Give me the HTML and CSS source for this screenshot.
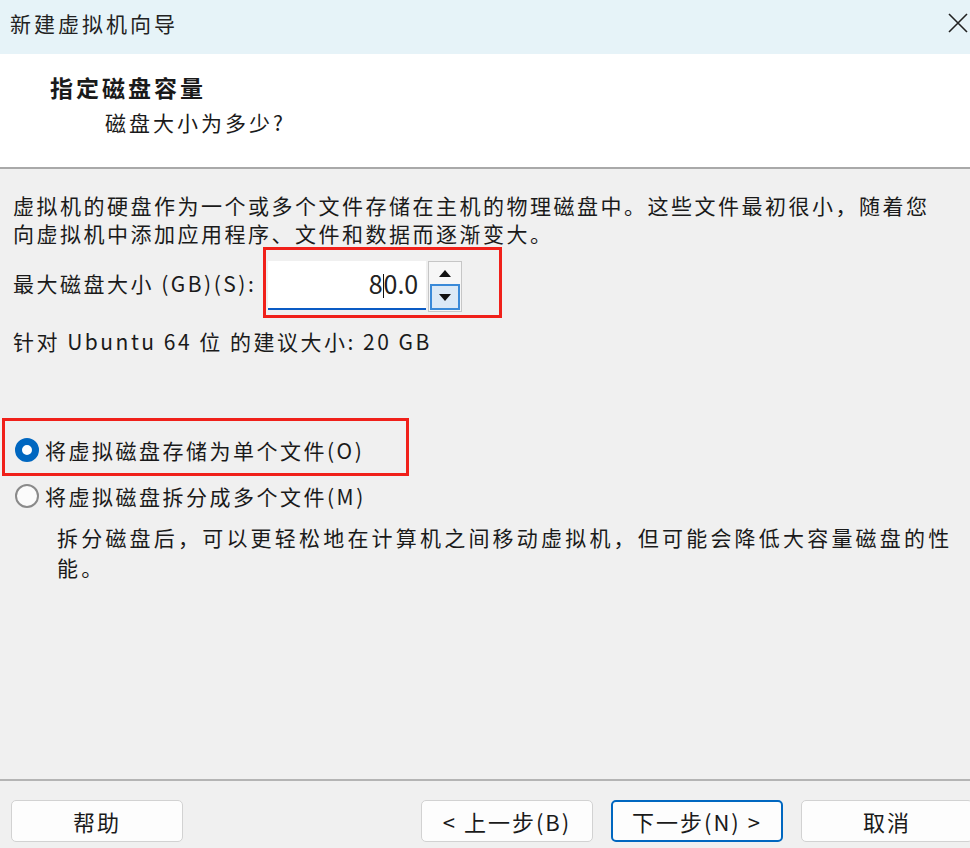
FILE: index.html
```
<!DOCTYPE html>
<html lang="zh-CN">
<head>
    <meta charset="UTF-8">
    <meta name="viewport" content="width=device-width, initial-scale=1.0">
    <title>新建虚拟机向导</title>
    <link rel="stylesheet" href="styles.css">
</head>
<body>
    <div class="dialog">
        <!-- Title bar -->
        <div class="titlebar">
            <span class="title">新建虚拟机向导</span>
            <span class="close">
                <svg width="22" height="22" viewBox="0 0 22 22"><path d="M2 2L20 20M20 2L2 20" stroke="#222" stroke-width="1.6" fill="none"/></svg>
            </span>
        </div>

        <!-- Wizard header -->
        <div class="header">
            <h1>指定磁盘容量</h1>
            <p>磁盘大小为多少?</p>
        </div>

        <!-- Page content -->
        <div class="content">
            <p class="intro">虚拟机的硬盘作为一个或多个文件存储在主机的物理磁盘中。这些文件最初很小，随着您<br>向虚拟机中添加应用程序、文件和数据而逐渐变大。</p>

            <div class="size-row">
                <label for="disk-size">最大磁盘大小 (GB)(S):</label>
                <span class="mark mark-input">
                    <span class="spin-box">
                        <span class="spin-input" id="disk-size">8<span class="caret"></span>0.0</span>
                        <span class="spin-buttons">
                            <span class="spin-btn"><span class="tri-up"></span></span>
                            <span class="spin-btn active"><span class="tri-down"></span></span>
                        </span>
                    </span>
                </span>
            </div>

            <p class="hint">针对 Ubuntu 64 位 的建议大小: 20 GB</p>

            <div class="options">
                <div class="mark mark-radio">
                    <label class="radio"><span class="dot checked"></span>将虚拟磁盘存储为单个文件(O)</label>
                </div>
                <label class="radio"><span class="dot"></span>将虚拟磁盘拆分成多个文件(M)</label>
                <p class="desc">拆分磁盘后，可以更轻松地在计算机之间移动虚拟机，但可能会降低大容量磁盘的性<br>能。</p>
            </div>
        </div>

        <!-- Buttons -->
        <div class="footer">
            <button class="btn">帮助</button>
            <div class="nav">
                <button class="btn">&lt; 上一步(B)</button>
                <button class="btn focus">下一步(N) &gt;</button>
                <button class="btn">取消</button>
            </div>
        </div>
    </div>
</body>
</html>
```
FILE: styles.css
```
body {
    margin: 0;
    padding: 0;
    font-family: "Noto Sans CJK SC", "Noto Sans", sans-serif;
    color: #1a1a1a;
    background-color: #f0f0f0;
}
.dialog {
    width: 970px;
    height: 848px;
    display: flex;
    flex-direction: column;
    overflow: hidden;
}

/* Title bar */
.titlebar {
    height: 54px;
    flex-shrink: 0;
    display: flex;
    align-items: center;
    justify-content: space-between;
    padding: 0 1px 8px 10px;
    box-sizing: border-box;
    background-color: #e6f3f8;
}
.title {
    font-size: 21px;
    letter-spacing: 3px;
    color: #222;
}
.close {
    display: flex;
}

/* Header */
.header {
    height: 115px;
    flex-shrink: 0;
    background-color: #fff;
    border-bottom: 2px solid #a9a9a9;
    box-sizing: border-box;
    padding: 17px 0 0 50px;
}
.header h1 {
    margin: 0;
    font-size: 23px;
    font-weight: bold;
    letter-spacing: 3px;
    line-height: 32px;
}
.header p {
    margin: 4px 0 0 55px;
    font-size: 21px;
    letter-spacing: 3px;
    line-height: 30px;
}

/* Content */
.content {
    flex-grow: 1;
    padding: 22px 0 0 13px;
    border-bottom: 2px solid #b4b4b4;
    font-size: 21px;
    letter-spacing: 2.5px;
}
.intro {
    margin: 0;
    line-height: 28px;
}
.size-row {
    display: flex;
    align-items: center;
    margin-top: 0;
}
.mark {
    border: 3px solid #f0201a;
}
.mark-input {
    display: inline-flex;
    margin-left: 7px;
    padding: 11px 37px 3px 2px;
}
.spin-box {
    display: flex;
}
.spin-input {
    width: 158px;
    height: 49px;
    box-sizing: border-box;
    background-color: #fff;
    border-bottom: 2px solid #0a5bc4;
    text-align: right;
    padding: 4px 8px 0 0;
    font-size: 25px;
    letter-spacing: 0;
    color: #222;
}
.caret {
    display: inline-block;
    width: 1px;
    height: 24px;
    background-color: #111;
    vertical-align: -4px;
}
.spin-buttons {
    display: flex;
    flex-direction: column;
    width: 34px;
    height: 51px;
    margin-left: 2px;
    border: 1px solid #c6c6c6;
    box-sizing: border-box;
    background-color: #f6f6f6;
}
.spin-btn {
    flex: 1;
    display: flex;
    align-items: center;
    justify-content: center;
}
.spin-btn.active {
    background-color: #dbe9f6;
    border: 2px solid #3a8ad8;
    margin: 0 1px 1px;
}
.tri-up {
    border-left: 6px solid transparent;
    border-right: 6px solid transparent;
    border-bottom: 7px solid #111;
}
.tri-down {
    border-left: 6px solid transparent;
    border-right: 6px solid transparent;
    border-top: 7px solid #111;
}
.hint {
    margin: 8px 0 0;
    line-height: 30px;
}

/* Radio options */
.options {
    margin: 62px 0 0 -11px;
}
.mark-radio {
    width: 401px;
    padding: 14px 0 8px 0;
}
.radio {
    display: flex;
    align-items: center;
    gap: 6px;
    padding-left: 10px;
    line-height: 30px;
}
.options > .radio {
    margin-top: 5px;
    padding-left: 13px;
}
.dot {
    width: 24px;
    height: 24px;
    box-sizing: border-box;
    border-radius: 50%;
    border: 2px solid #8a8a8a;
    background-color: #fbfbfb;
}
.dot.checked {
    border: 7px solid #0067c0;
    background-color: #fff;
}
.desc {
    margin: 11px 0 0 55px;
    line-height: 30px;
    letter-spacing: 3.2px;
}

/* Footer */
.footer {
    height: 67px;
    flex-shrink: 0;
    display: flex;
    justify-content: space-between;
    padding: 19px 0 0 11px;
    box-sizing: border-box;
}
.nav {
    display: flex;
    gap: 18px;
    margin-right: -3px;
}
.btn {
    width: 172px;
    height: 42px;
    font-family: inherit;
    font-size: 22px;
    letter-spacing: 2px;
    color: #1a1a1a;
    background-color: #fdfdfd;
    border: 1px solid #d2d2d2;
    border-radius: 5px;
}
.btn.focus {
    border: 2px solid #0067c0;
}
```
